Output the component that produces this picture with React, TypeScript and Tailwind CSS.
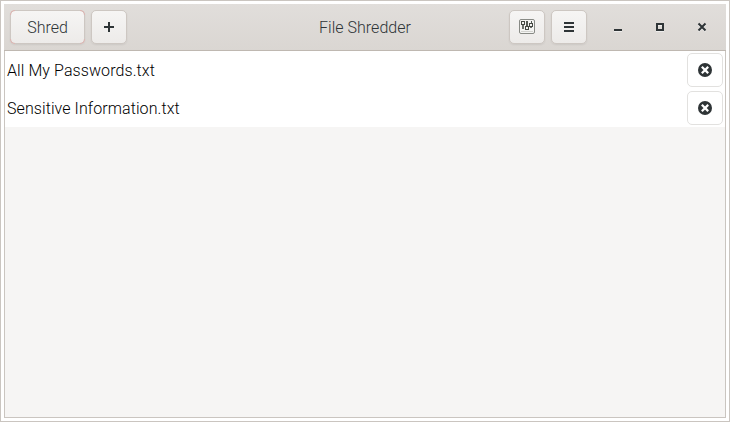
import React from 'react';

const headerButton =
  'relative flex h-[34px] items-center justify-center rounded-[5px] border border-[#cdc7c2] bg-linear-to-b from-[#f6f5f4] to-[#edebe9] shadow-[0_1px_2px_rgba(0,0,0,0.07)]';

function MixerIcon() {
  return (
    <svg width="16" height="16" viewBox="0 0 16 16" shapeRendering="crispEdges">
      <rect x="0.5" y="0.5" width="15" height="14" rx="1.5" fill="#f4f4f2" stroke="#888a85" shapeRendering="auto" />
      <path d="M2 12h12v1H2z" fill="#d3d3cf" />
      <path d="M3 6h2v4H3zM11 8h2v1h-2z" fill="#6c706b" />
      <path d="M7 2h2v5H7zM12 2h1v2h-1z" fill="#555954" />
      <path d="M2.5 2.5h3v3h-3zM6.500 7.500h3v3h-3zM10.500 4.500h3v3h-3z" fill="#f4f4f2" stroke="#454944" />
    </svg>
  );
}

function FileRow({ name }: { name: string }) {
  return (
    <li className="flex h-[38px] items-center justify-between bg-white pr-[2px] pl-[2px] text-black">
      <span className="pt-[2px] tracking-[0.085px]">{name}</span>
      <button aria-label={`Remove ${name}`} className="flex h-[34px] w-9 items-center justify-center rounded-[5px] border border-[#e2e1df]">
        <svg width="16" height="16" viewBox="0 0 16 16">
          <circle cx="8" cy="8" r="7" fill="#2e3436" />
          <path d="M5.600 5.600l4.800 4.800M10.400 5.600l-4.800 4.800" stroke="white" strokeWidth="2.200" strokeLinecap="square" />
        </svg>
      </button>
    </li>
  );
}

export default function App() {
  return (
    <div className="flex h-[422px] w-[730px] border border-[#cac5c0] bg-white p-[3px] font-['Roboto','Liberation_Sans',sans-serif] text-[16px] leading-5 font-light">
      <div className="flex w-full flex-col">
        <header className="grid h-[47px] shrink-0 grid-cols-[1fr_auto_1fr] items-center border-b border-[#bfb8b1] bg-linear-to-b from-[#e1dedb] to-[#dad6d2] pr-[6px] pl-[6px] text-[#2e3436]">
          <div className="flex gap-[6px]">
            <button className={`${headerButton} w-[75px]`}>
              <span className="pt-[2px]">Shred</span>
              <i className="absolute -top-px -left-px size-[5px] rounded-tl-[5px] border-t border-l border-[#dfb5b2]" />
              <i className="absolute -top-px -right-px size-[5px] rounded-tr-[5px] border-t border-r border-[#dfb5b2]" />
              <i className="absolute -bottom-px -left-px size-[5px] rounded-bl-[5px] border-b border-l border-[#dfb5b2]" />
              <i className="absolute -right-px -bottom-px size-[5px] rounded-br-[5px] border-r border-b border-[#dfb5b2]" />
            </button>
            <button aria-label="Add" className={`${headerButton} w-9`}>
              <svg width="16" height="16" viewBox="0 0 16 16" shapeRendering="crispEdges">
                <path d="M7 3h2v4h4v2H9v4H7V9H3V7h4z" fill="#2e3436" />
              </svg>
            </button>
          </div>
          <h1 className="pt-[2px] tracking-[0.03px]">File Shredder</h1>
          <div className="flex items-center justify-end">
            <div className="flex gap-[6px] pr-[23px]">
              <button aria-label="Preferences" className={`${headerButton} w-9`}>
                <MixerIcon />
              </button>
              <button aria-label="Menu" className={`${headerButton} w-9`}>
                <svg width="16" height="16" viewBox="0 0 16 16" shapeRendering="crispEdges">
                  <path d="M3 3h10v2H3zM3 7h10v2H3zM3 11h10v2H3z" fill="#2e3436" />
                </svg>
              </button>
            </div>
            <div className="flex gap-[26px] pr-[10px]">
              <svg width="16" height="16" viewBox="0 0 16 16" shapeRendering="crispEdges">
                <path d="M4 12h8v1H4z" fill="#eeedec" />
                <path d="M4 10h8v2H4z" fill="#2e3436" />
              </svg>
              <svg width="16" height="16" viewBox="0 0 16 16" shapeRendering="crispEdges">
                <path d="M4 12h8v1H4zM6 6h4v1H6z" fill="#eeedec" />
                <path d="M5 5h6v6H5z" fill="none" stroke="#2e3436" strokeWidth="2" />
              </svg>
              <svg width="16" height="16" viewBox="0 0 16 16">
                <path d="M4.500 5.500l7 7M11.500 5.500l-7 7" stroke="#eeedec" strokeWidth="2" />
                <path d="M4.500 4.500l7 7M11.500 4.500l-7 7" stroke="#2e3436" strokeWidth="2" />
              </svg>
            </div>
          </div>
        </header>
        <main className="flex-1 border-x border-b border-[#cac5c0] bg-[#f6f5f4]">
          <ul>
            <FileRow name="All My Passwords.txt" />
            <FileRow name="Sensitive Information.txt" />
          </ul>
        </main>
      </div>
    </div>
  );
}
